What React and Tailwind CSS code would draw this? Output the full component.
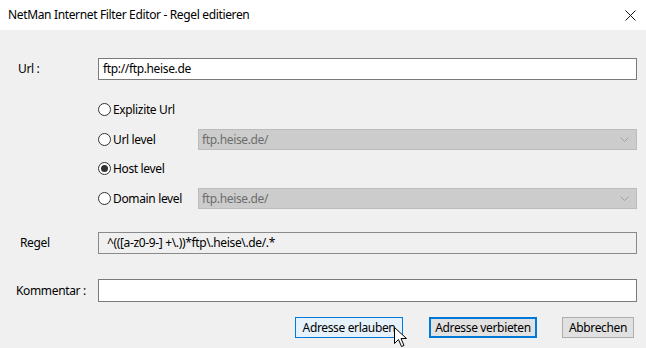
import React from 'react'

const font = { fontFamily: '"Segoe UI", "Noto Sans", "Liberation Sans", sans-serif' };

const Radio = ({ checked, label }) => (
    <div className="flex w-[100px] items-center">
        <span className="flex h-[13px] w-[13px] items-center justify-center rounded-full border border-[#333333] bg-white">
            {checked && <span className="h-[7px] w-[7px] rounded-full bg-[#333333]" />}
        </span>
        <span className="ml-[2px] text-[12px] text-black">{label}</span>
    </div>
);

const Combo = ({ value }) => (
    <div className="flex h-[21px] flex-1 items-center justify-between border border-[#bcbcbc] bg-[#cccccc] pl-[3px] pr-[7px] text-[12px] text-[#6d6d6d]">
        <span>{value}</span>
        <svg width="9" height="5" viewBox="0 0 9 5" className="text-[#a0a0a0]">
            <path d="M0.5 0.5 L4.5 4.5 L8.5 0.5" fill="none" stroke="currentColor" strokeWidth="1" />
        </svg>
    </div>
);

const App = () => {
    return (
        <div className="h-[348px] w-[646px] overflow-hidden bg-[#f0f0f0] tracking-[-0.35px]" style={font}>
            {/* title bar */}
            <div className="flex h-[30px] items-center justify-between bg-white pl-[8px] pr-[10px]">
                <span className="text-[12px] text-black">NetMan Internet Filter Editor - Regel editieren</span>
                <svg width="11" height="11" viewBox="0 0 11 11">
                    <path d="M0.5 0.5 L10.5 10.5 M10.5 0.5 L0.5 10.5" stroke="#111" strokeWidth="1" />
                </svg>
            </div>

            <div className="flex flex-col pr-[9px]">
                {/* url */}
                <div className="mt-[28px] flex items-center">
                    <span className="w-[98px] pl-[18px] text-[12px] text-black">Url :</span>
                    <div className="flex h-[22px] flex-1 items-center border border-[#7a7a7a] bg-white px-[4px] text-[12px] text-black">
                        ftp://ftp.heise.de
                    </div>
                </div>

                {/* radio rows */}
                <div className="ml-[98px] flex flex-col">
                    <div className="mt-[19px] flex h-[21px] items-center">
                        <Radio label="Explizite Url" />
                    </div>
                    <div className="mt-[9px] flex h-[21px] items-center">
                        <Radio label="Url level" />
                        <Combo value="ftp.heise.de/" />
                    </div>
                    <div className="mt-[8px] flex h-[21px] items-center">
                        <Radio checked label="Host level" />
                    </div>
                    <div className="mt-[9px] flex h-[21px] items-center">
                        <Radio label="Domain level" />
                        <Combo value="ftp.heise.de/" />
                    </div>
                </div>

                {/* regel */}
                <div className="mt-[23px] flex items-center">
                    <span className="w-[98px] pl-[20px] text-[12px] text-black">Regel</span>
                    <div className="flex h-[22px] flex-1 items-center border border-[#8a8a8a] bg-[#f0f0f0] px-[8px] text-[12px] text-black">
                        ^(([a-z0-9-] +\.))*ftp\.heise\.de/.*
                    </div>
                </div>

                {/* kommentar */}
                <div className="mt-[25px] flex items-center">
                    <span className="w-[98px] pl-[16px] text-[12px] text-black">Kommentar :</span>
                    <div className="h-[23px] flex-1 border border-[#7a7a7a] bg-white" />
                </div>

                {/* buttons */}
                <div className="mt-[15px] flex items-center">
                    <div className="ml-[295px] flex h-[21px] w-[108px] items-center justify-center border border-[#0078d7] bg-[#e5f1fb] text-[12px] text-black">
                        Adresse erlauben
                    </div>
                    <div className="ml-[26px] flex h-[21px] w-[108px] items-center justify-center border-2 border-[#0078d7] bg-[#e1e1e1] text-[12px] text-black">
                        Adresse verbieten
                    </div>
                    <div className="ml-[25px] flex h-[21px] w-[72px] items-center justify-center border border-[#adadad] bg-[#e1e1e1] text-[12px] text-black">
                        Abbrechen
                    </div>
                </div>
            </div>

            {/* mouse cursor */}
            <svg className="absolute left-[394px] top-[327px]" width="14" height="21" viewBox="0 0 14 21">
                <path d="M0.5 0.5 L0.5 16.5 L4.5 12.5 L7.5 19.5 L10 18.5 L7 11.5 L12.5 11.5 Z" fill="white" stroke="black" strokeWidth="1" strokeLinejoin="miter" />
            </svg>
        </div>
    );
};

export default App
